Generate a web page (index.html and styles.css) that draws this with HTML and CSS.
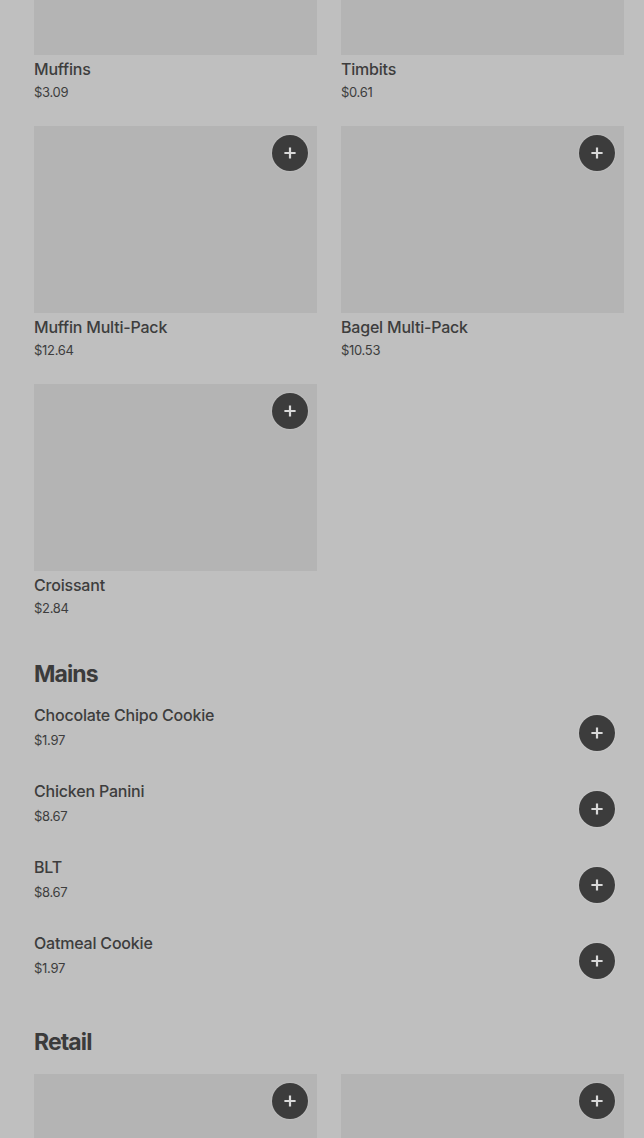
FILE: index.html
```html
<!DOCTYPE html>
<html lang="en">
<head>
<meta charset="utf-8">
<title>Menu</title>
<link rel="stylesheet" href="styles.css">
</head>
<body>
<main class="page">
  <section class="grid grid-top">
    <div class="card">
      <div class="thumb"></div>
      <div class="name">Muffins</div>
      <div class="price">$3.09</div>
    </div>
    <div class="card">
      <div class="thumb"></div>
      <div class="name">Timbits</div>
      <div class="price">$0.61</div>
    </div>
    <div class="card">
      <div class="thumb"><button class="add"><svg viewBox="0 0 16 16" width="16" height="16"><path d="M8 3.5v9M3.5 8h9" stroke="#d9d9d9" stroke-width="2.2" stroke-linecap="square"/></svg></button></div>
      <div class="name">Muffin Multi-Pack</div>
      <div class="price">$12.64</div>
    </div>
    <div class="card">
      <div class="thumb"><button class="add"><svg viewBox="0 0 16 16" width="16" height="16"><path d="M8 3.5v9M3.5 8h9" stroke="#d9d9d9" stroke-width="2.2" stroke-linecap="square"/></svg></button></div>
      <div class="name">Bagel Multi-Pack</div>
      <div class="price">$10.53</div>
    </div>
    <div class="card">
      <div class="thumb"><button class="add"><svg viewBox="0 0 16 16" width="16" height="16"><path d="M8 3.5v9M3.5 8h9" stroke="#d9d9d9" stroke-width="2.2" stroke-linecap="square"/></svg></button></div>
      <div class="name">Croissant</div>
      <div class="price">$2.84</div>
    </div>
  </section>

  <section class="section">
    <h2 class="heading">Mains</h2>
    <div class="list">
      <div class="item">
        <div class="info"><div class="name">Chocolate Chipo Cookie</div><div class="price">$1.97</div></div>
        <button class="add"><svg viewBox="0 0 16 16" width="16" height="16"><path d="M8 3.5v9M3.5 8h9" stroke="#d9d9d9" stroke-width="2.2" stroke-linecap="square"/></svg></button>
      </div>
      <div class="item">
        <div class="info"><div class="name">Chicken Panini</div><div class="price">$8.67</div></div>
        <button class="add"><svg viewBox="0 0 16 16" width="16" height="16"><path d="M8 3.5v9M3.5 8h9" stroke="#d9d9d9" stroke-width="2.2" stroke-linecap="square"/></svg></button>
      </div>
      <div class="item">
        <div class="info"><div class="name">BLT</div><div class="price">$8.67</div></div>
        <button class="add"><svg viewBox="0 0 16 16" width="16" height="16"><path d="M8 3.5v9M3.5 8h9" stroke="#d9d9d9" stroke-width="2.2" stroke-linecap="square"/></svg></button>
      </div>
      <div class="item">
        <div class="info"><div class="name">Oatmeal Cookie</div><div class="price">$1.97</div></div>
        <button class="add"><svg viewBox="0 0 16 16" width="16" height="16"><path d="M8 3.5v9M3.5 8h9" stroke="#d9d9d9" stroke-width="2.2" stroke-linecap="square"/></svg></button>
      </div>
    </div>
  </section>

  <section class="section section-retail">
    <h2 class="heading">Retail</h2>
    <div class="grid">
      <div class="card">
        <div class="thumb"><button class="add"><svg viewBox="0 0 16 16" width="16" height="16"><path d="M8 3.5v9M3.5 8h9" stroke="#d9d9d9" stroke-width="2.2" stroke-linecap="square"/></svg></button></div>
      </div>
      <div class="card">
        <div class="thumb"><button class="add"><svg viewBox="0 0 16 16" width="16" height="16"><path d="M8 3.5v9M3.5 8h9" stroke="#d9d9d9" stroke-width="2.2" stroke-linecap="square"/></svg></button></div>
      </div>
    </div>
  </section>
</main>
</body>
</html>
```

FILE: styles.css
```css
html, body {
  margin: 0;
  padding: 0;
  background: #bfbfbf;
  height: 1138px;
  overflow: hidden;
}

body {
  font-family: Inter, "Open Sans", "Liberation Sans", sans-serif;
  color: #3d3d3d;
}

.page {
  padding: 0 20px 0 34px;
}

.grid {
  display: grid;
  grid-template-columns: 283px 283px;
  column-gap: 24px;
  row-gap: 25px;
}

.grid-top {
  margin-top: -132px;
}

.card {
  display: flex;
  flex-direction: column;
}

.thumb {
  position: relative;
  height: 187px;
  background: #b4b4b4;
}

.name {
  font-size: 16px;
  line-height: 20px;
  font-weight: 500;
  letter-spacing: -0.2px;
}

.card .name {
  margin-top: 4px;
}

.price {
  font-size: 13px;
  line-height: 18px;
  margin-top: 4px;
  letter-spacing: -0.3px;
  font-weight: 400;
}

.add {
  width: 36px;
  height: 36px;
  border-radius: 50%;
  border: none;
  padding: 0;
  background: #3c3c3c;
  display: flex;
  align-items: center;
  justify-content: center;
  box-shadow: 0 0 2px rgba(255, 255, 255, 0.35);
}

.thumb .add {
  position: absolute;
  top: 9px;
  right: 9px;
}

.section {
  margin-top: 41px;
}

.heading {
  margin: 0;
  font-size: 23px;
  line-height: 32px;
  font-weight: 700;
  letter-spacing: -0.9px;
  color: #3b3b3b;
}

.list {
  margin-top: 3px;
}

.item {
  display: flex;
  justify-content: space-between;
  align-items: center;
  height: 76px;
  padding-right: 9px;
}

.item .info {
  margin-top: -8px;
}

.item .price {
  margin-top: 6px;
}

.item .add {
  margin-top: 4px;
}

.section-retail {
  margin-top: 29px;
}

.section-retail .grid {
  margin-top: 16px;
}
```
